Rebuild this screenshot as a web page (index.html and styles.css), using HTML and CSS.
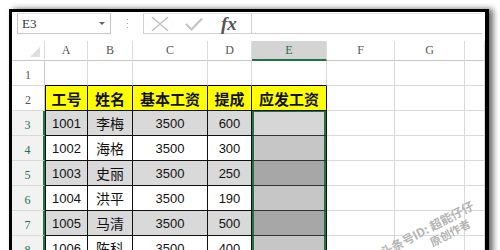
FILE: index.html
```html
<!DOCTYPE html>
<html>
<head>
<meta charset="utf-8">
<link rel="stylesheet" href="styles.css">
</head>
<body>
<div class="frame">
  <div class="fbar">
    <div class="namebox"><span class="nb-text">E3</span><span class="nb-arrow"></span></div>
    <div class="dots"><i></i><i></i><i></i></div>
    <div class="fxbox">
      <svg class="ico-x" width="20" height="16" viewBox="0 0 20 16"><path d="M2 1 L18 15 M18 1 L2 15" stroke="#c4c4c4" stroke-width="1.6" fill="none"/></svg>
      <svg class="ico-ok" width="18" height="14" viewBox="0 0 18 14"><path d="M1 7 L6.5 12.5 L17 1.5" stroke="#c4c4c4" stroke-width="2.2" fill="none"/></svg>
      <span class="fx">fx</span>
    </div>
    <div class="finput"></div>
  </div>
  <table class="grid">
    <colgroup>
      <col class="w-rh"><col class="w-a"><col class="w-b"><col class="w-c"><col class="w-d"><col class="w-e"><col class="w-f"><col class="w-g"><col class="w-h">
    </colgroup>
    <tr class="hdr">
      <th class="corner"><span class="tri"></span></th><th>A</th><th>B</th><th>C</th><th>D</th><th class="sel">E</th><th>F</th><th>G</th><th></th>
    </tr>
    <tr class="r">
      <th class="rh">1</th><td class="top"></td><td class="top"></td><td class="top"></td><td class="top"></td><td class="top"></td><td></td><td></td><td></td>
    </tr>
    <tr class="r head">
      <th class="rh">2</th><td class="d first">工号</td><td class="d">姓名</td><td class="d">基本工资</td><td class="d">提成</td><td class="d">应发工资</td><td></td><td></td><td></td>
    </tr>
    <tr class="r g">
      <th class="rh s">3</th><td class="d first n">1001</td><td class="d">李梅</td><td class="d n">3500</td><td class="d n">600</td><td class="d e act"></td><td></td><td></td><td></td>
    </tr>
    <tr class="r">
      <th class="rh s">4</th><td class="d first n">1002</td><td class="d">海格</td><td class="d n">3500</td><td class="d n">300</td><td class="d e lt"></td><td></td><td></td><td></td>
    </tr>
    <tr class="r g">
      <th class="rh s">5</th><td class="d first n">1003</td><td class="d">史丽</td><td class="d n">3500</td><td class="d n">250</td><td class="d e dk"></td><td></td><td></td><td></td>
    </tr>
    <tr class="r">
      <th class="rh s">6</th><td class="d first n">1004</td><td class="d">洪平</td><td class="d n">3500</td><td class="d n">190</td><td class="d e lt"></td><td></td><td></td><td></td>
    </tr>
    <tr class="r g">
      <th class="rh s">7</th><td class="d first n">1005</td><td class="d">马清</td><td class="d n">3500</td><td class="d n">500</td><td class="d e dk"></td><td></td><td></td><td></td>
    </tr>
    <tr class="r">
      <th class="rh s">8</th><td class="d first n">1006</td><td class="d">陈科</td><td class="d n">3500</td><td class="d n">400</td><td class="d e lt"></td><td></td><td></td><td></td>
    </tr>
  </table>
  <div class="wm">
    <span class="wm1">头条号ID: 超能仔仔</span>
    <span class="wm2">原创作者</span>
  </div>
</div>
</body>
</html>
```
FILE: styles.css
```css
html, body {
  margin: 0;
  padding: 0;
  background: #fff;
  overflow: hidden;
  width: 500px;
  height: 250px;
}
body {
  padding: 9px 0 0 9px;
  box-sizing: border-box;
}
.frame {
  position: relative;
  width: 473px;
  height: 260px;
  border-top: 3px solid #000;
  border-left: 3px solid #000;
  border-right: 4px solid #000;
  box-shadow: 4px 0 6px rgba(0,0,0,0.6);
  background: #fff;
  overflow: hidden;
}
.fbar {
  display: flex;
  align-items: flex-start;
  height: 29px;
  padding-top: 1px;
  box-sizing: border-box;
}
.namebox {
  margin-left: 5px;
  width: 94px;
  height: 21px;
  box-sizing: border-box;
  border: 1px solid #c6c6c6;
  border-top-color: #e0e0e0;
  display: flex;
  align-items: center;
  justify-content: space-between;
  padding: 0 5px 0 4px;
  font-family: "Liberation Serif", serif;
  font-size: 13px;
  color: #333;
}
.nb-arrow {
  width: 0;
  height: 0;
  border-left: 3px solid transparent;
  border-right: 3px solid transparent;
  border-top: 3px solid #666;
}
.dots {
  width: 32px;
  height: 21px;
  display: flex;
  flex-direction: column;
  align-items: center;
  justify-content: center;
  gap: 3px;
}
.dots i {
  display: block;
  width: 1px;
  height: 1px;
  background: #aaa;
}
.fxbox {
  width: 108px;
  height: 21px;
  box-sizing: border-box;
  border: 1px solid #d0d0d0;
  border-top-color: #e4e4e4;
  border-right: none;
  display: flex;
  align-items: center;
  padding-left: 6px;
}
.ico-x { margin-right: 15px; }
.ico-ok { margin-right: 18px; }
.fx {
  font-family: "Liberation Serif", serif;
  font-style: italic;
  font-weight: bold;
  font-size: 19px;
  color: #555;
  line-height: 19px;
  margin-top: -1px;
}
.finput {
  flex: 1;
  height: 21px;
  box-sizing: border-box;
  border: 1px solid #d0d0d0;
  border-top-color: #e4e4e4;
  border-right: none;
  margin-right: 3px;
}
.grid {
  border-collapse: separate;
  border-spacing: 0;
  table-layout: fixed;
  width: 473px;
  margin-top: 0;
}
.w-rh { width: 33px; }
.w-a { width: 43px; }
.w-b { width: 45px; }
.w-c { width: 75px; }
.w-d { width: 44px; }
.w-e { width: 75px; }
.w-f { width: 68px; }
.w-g { width: 70px; }
.w-h { width: 20px; }
.grid th, .grid td {
  padding: 0;
  box-sizing: border-box;
  border-right: 1px solid #d9d9d9;
  border-bottom: 1px solid #d9d9d9;
  overflow: hidden;
  white-space: nowrap;
}
.hdr th {
  height: 20px;
  font-family: "Liberation Serif", serif;
  font-weight: normal;
  font-size: 12px;
  color: #555;
  text-align: center;
  vertical-align: middle;
  border-right-color: #dcdcdc;
  border-bottom-color: #c8c8c8;
}
.hdr th.sel {
  background: #d4d4d4;
  color: #217346;
  border-bottom: 2px solid #217346;
}
.corner { position: relative; }
.tri {
  position: absolute;
  right: 4px;
  bottom: 3px;
  width: 0;
  height: 0;
  border-left: 10px solid transparent;
  border-bottom: 10px solid #dedede;
}
.r > * { height: 25px; }
.rh {
  font-family: "Liberation Serif", serif;
  font-weight: normal;
  font-size: 12px;
  color: #555;
  text-align: center;
  vertical-align: bottom;
  padding-bottom: 2px !important;
  border-right-color: #c8c8c8 !important;
}
.rh.s {
  color: #217346;
  background: #f2f2f2;
  border-right: 2px solid #217346 !important;
}
.grid td.top { border-bottom-color: #000; }
.grid td.d {
  border-right-color: #111;
  border-bottom-color: #111;
  text-align: center;
  vertical-align: middle;
  font-family: "Noto Sans CJK SC", sans-serif;
  font-size: 14px;
  color: #111;
}
.grid td.d.first { border-left: 1px solid #111; }
.grid td.n {
  font-family: "Liberation Sans", Arial, sans-serif;
  font-size: 13px;
}
.head td.d {
  background: #ffff00;
  font-weight: bold;
  font-size: 15px;
}
.g td.d { background: #d9d9d9; }
.grid td.e {
  box-shadow: inset 2px 0 0 #217346, inset -2px 0 0 #217346;
  border-bottom-color: #333;
}
.grid td.e.act {
  background: #d6d6d6;
  box-shadow: inset 2px 0 0 #217346, inset -2px 0 0 #217346, inset 0 1px 0 #217346;
}
.grid td.e.lt { background: #c6c6c6; }
.grid td.e.dk { background: #a7a7a7; }
.wm {
  position: absolute;
  left: 352px;
  top: 208px;
  width: 150px;
  transform: rotate(-28deg);
  transform-origin: left top;
  font-family: "Noto Sans CJK SC", sans-serif;
  font-weight: bold;
  color: #b4b4b4;
  text-shadow: 0 0 1px #fff;
  line-height: 14px;
}
.wm1 { display: block; font-size: 12px; margin-top: 30px; }
.wm2 { display: block; font-size: 11px; margin-left: 48px; }
```
